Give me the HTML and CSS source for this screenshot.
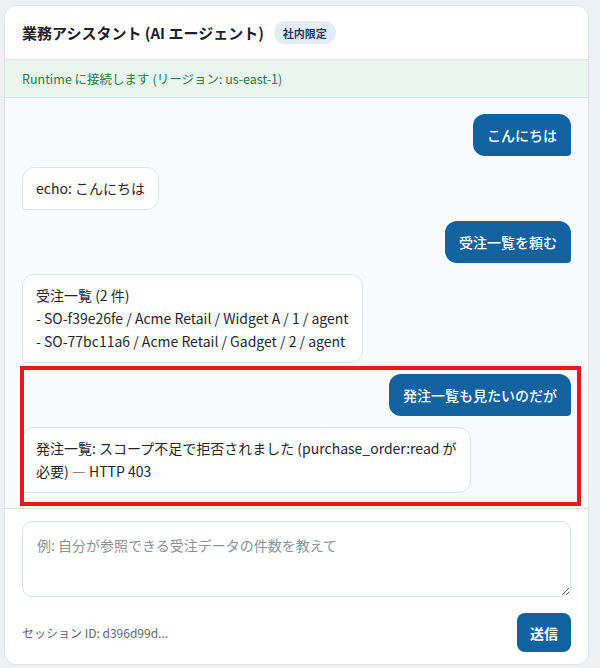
FILE: index.html
```html
<!DOCTYPE html>
<html lang="ja">
<head>
<meta charset="utf-8">
<title>業務アシスタント</title>
<link rel="stylesheet" href="styles.css">
</head>
<body>
<div class="card">
  <header class="card-header">
    <h1 class="title">業務アシスタント (AI エージェント)</h1>
    <span class="badge">社内限定</span>
  </header>
  <div class="status">Runtime に接続します (リージョン: us-east-1)</div>
  <div class="messages">
    <div class="msg user">こんにちは</div>
    <div class="msg bot">echo: こんにちは</div>
    <div class="msg user">受注一覧を頼む</div>
    <div class="msg bot">受注一覧 (2 件)<br>- SO-f39e26fe / Acme Retail / Widget A / 1 / agent<br>- SO-77bc11a6 / Acme Retail / Gadget / 2 / agent</div>
    <div class="highlight">
      <div class="msg user">発注一覧も見たいのだが</div>
      <div class="msg bot">発注一覧: スコープ不足で拒否されました (purchase_order:read が<br>必要) — HTTP 403</div>
      <span class="highlight-frame"></span>
    </div>
  </div>
  <div class="composer">
    <textarea class="input" placeholder="例: 自分が参照できる受注データの件数を教えて"></textarea>
    <div class="composer-row">
      <span class="session">セッション ID: d396d99d...</span>
      <button class="send">送信</button>
    </div>
  </div>
</div>
</body>
</html>
```

FILE: styles.css
```css
* { box-sizing: border-box; }

html, body {
  margin: 0;
  background: #eef0f3;
}

body {
  padding: 5px 0 0 4px;
  font-family: "Noto Sans CJK JP", "Noto Sans", sans-serif;
  color: #1f2630;
}

.card {
  width: 585px;
  height: 660px;
  display: flex;
  flex-direction: column;
  background: #ffffff;
  border: 1px solid #dfe3e8;
  border-radius: 12px;
  overflow: hidden;
}

.card-header {
  flex-shrink: 0;
  display: flex;
  align-items: center;
  gap: 10px;
  padding: 0 17px;
  height: 54px;
  border-bottom: 1px solid #dfe3e8;
}

.title {
  margin: 0;
  font-size: 15px;
  font-weight: 700;
  color: #1b2029;
}

.badge {
  display: inline-flex;
  align-items: center;
  height: 23px;
  padding: 0 9px;
  border-radius: 12px;
  background: #e4edf6;
  color: #1d3a5c;
  font-size: 11px;
  font-weight: 700;
}

.status {
  flex-shrink: 0;
  height: 38px;
  padding: 0 17px;
  display: flex;
  align-items: center;
  background: #eaf5ef;
  border-bottom: 1px solid #dde3e8;
  color: #2a7a4c;
  font-size: 12.5px;
}

.messages {
  flex: 1;
  min-height: 0;
  display: flex;
  flex-direction: column;
  gap: 11px;
  padding: 16px 17px;
  background: #f8fafc;
}

.msg {
  max-width: 85%;
  font-size: 14px;
  line-height: 23px;
  border-radius: 12px;
}

.msg.user {
  align-self: flex-end;
  padding: 9.5px 14px;
  background: #11629f;
  color: #ffffff;
  font-weight: 500;
  border-bottom-right-radius: 4px;
}

.msg.bot {
  align-self: flex-start;
  padding: 9px 13px;
  background: #ffffff;
  border: 1px solid #dfe4ea;
  color: #1f2630;
  border-bottom-left-radius: 4px;
}

.highlight {
  position: relative;
  display: flex;
  flex-direction: column;
  gap: 11px;
}

/* red callout frame drawn over the last exchange */
.highlight-frame {
  position: absolute;
  top: -8px;
  left: -2px;
  right: -10px;
  bottom: -13px;
  border: 4px solid #e31b1b;
  pointer-events: none;
}

.composer {
  flex-shrink: 0;
  border-top: 1px solid #dfe3e8;
  padding: 12px 17px 12px;
  display: flex;
  flex-direction: column;
  gap: 16px;
}

.input {
  display: block;
  width: 100%;
  height: 76px;
  padding: 12px 14px;
  border: 1px solid #d9dee5;
  border-radius: 10px;
  font-family: inherit;
  font-size: 14px;
  line-height: 1.6;
  color: #1f2630;
  background: #ffffff;
  resize: vertical;
}

.input::placeholder {
  color: #8a9099;
}

.composer-row {
  display: flex;
  align-items: center;
  justify-content: space-between;
}

.session {
  font-size: 12px;
  color: #5d6673;
}

.send {
  height: 39px;
  padding: 0 13px;
  border: none;
  border-radius: 8px;
  background: #11629f;
  color: #ffffff;
  font-family: inherit;
  font-size: 14px;
  font-weight: 700;
}
```
